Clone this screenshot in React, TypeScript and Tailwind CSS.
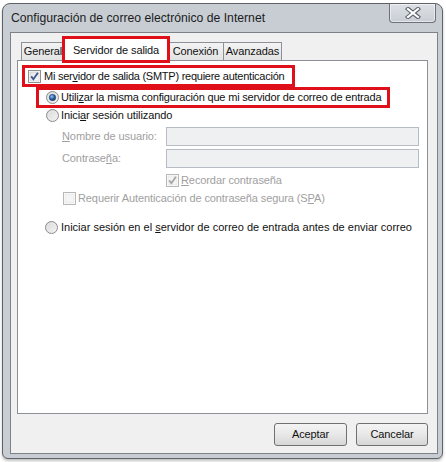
import React from 'react';

const font = { fontFamily: '"Liberation Sans", Arial, sans-serif' };

function CheckBox({ checked, disabled }: { checked?: boolean; disabled?: boolean }) {
  const border = disabled ? '#b8b8b8' : '#8e8f8f';
  const mark = disabled ? '#a6a6a6' : '#3b5590';
  return (
    <svg width="13" height="13" viewBox="0 0 13 13" className="shrink-0">
      <defs>
        <linearGradient id={disabled ? 'cbd' : 'cb'} x1="0" y1="0" x2="1" y2="1">
          <stop offset="0" stopColor={disabled ? '#f4f4f4' : '#e2e2e2'} />
          <stop offset="1" stopColor={disabled ? '#f4f4f4' : '#fbfbfb'} />
        </linearGradient>
      </defs>
      <rect x="0.5" y="0.5" width="12" height="12" fill="#fff" stroke={border} />
      <rect x="2" y="2" width="9" height="9" fill={`url(#${disabled ? 'cbd' : 'cb'})`} stroke={disabled ? '#e2e2e2' : '#c6c6c6'} strokeWidth="0.6" />
      {checked && <path d="M3.2 6.4 L5.4 9.3 L9.9 2.8" fill="none" stroke={mark} strokeWidth="1.8" />}
    </svg>
  );
}

function Radio({ checked }: { checked?: boolean }) {
  return (
    <svg width="13" height="13" viewBox="0 0 13 13" className="shrink-0">
      <defs>
        <linearGradient id="rb" x1="0" y1="0" x2="1" y2="1">
          <stop offset="0" stopColor="#d6d6d6" />
          <stop offset="1" stopColor="#f7f7f7" />
        </linearGradient>
        <radialGradient id="rd" cx="0.4" cy="0.35" r="0.7">
          <stop offset="0" stopColor="#9fc4ea" />
          <stop offset="0.5" stopColor="#2e6cb0" />
          <stop offset="1" stopColor="#0f2c55" />
        </radialGradient>
      </defs>
      <circle cx="6.5" cy="6.5" r="6" fill="url(#rb)" stroke="#8a8a8a" />
      <circle cx="6.5" cy="6.5" r="4.3" fill="none" stroke="#e8e8e8" strokeWidth="0.8" />
      {checked && <circle cx="6.5" cy="6.5" r="3.2" fill="url(#rd)" stroke="#1a3b66" strokeWidth="0.5" />}
    </svg>
  );
}

function RedBox({ className }: { className: string }) {
  return <div className={`absolute border-[3px] border-[#e0101a] pointer-events-none ${className}`} />;
}

export default function App() {
  return (
    <div className="w-[446px] h-[462px] bg-white pt-[3px] pl-[2px]" style={font}>
      {/* Window */}
      <div className="w-[441px] h-[456px] border border-[#5d6368] rounded-t-[8px] rounded-b-[6px] bg-[#c7cdd3] flex flex-col shadow-[0_2px_3px_rgba(0,0,0,0.25)]">
        {/* Title bar */}
        <div className="h-[28px] flex items-start justify-between">
          <div className="pl-[8px] pt-[7px] text-[12.2px] leading-[14px] text-[#1c1c1c]">
            Configuración de correo electrónico de Internet
          </div>
          <div className="mr-[6px] w-[47px] h-[19px] border border-t-0 border-[#6c7278] rounded-b-[4px] bg-gradient-to-b from-[#dde1e5] to-[#c8ced4] flex items-center justify-center shadow-[inset_0_0_0_1px_rgba(255,255,255,0.5)]">
            <svg width="16" height="12" viewBox="0 0 16 12">
              <path d="M3 2 L13 10 M13 2 L3 10" stroke="#5a6066" strokeWidth="4.2" strokeLinecap="square" />
              <path d="M3 2 L13 10 M13 2 L3 10" stroke="#ffffff" strokeWidth="2.2" strokeLinecap="square" />
            </svg>
          </div>
        </div>

        {/* Dialog body */}
        <div className="ml-[7px] mr-[4px] mb-[4px] flex-1 border border-[#7d8288] bg-[#f0f0f0] flex flex-col pl-[6px] pr-[9px] pt-[5px] text-[11px] tracking-[-0.1px] text-[#111]">
          {/* Tabs */}
          <div className="flex items-end pl-[4px] h-[22px]">
            <div className="w-[44px] h-[18px] border border-b-0 border-[#8d9097] bg-gradient-to-b from-[#f3f3f3] to-[#e3e3e3] flex items-center justify-center">
              General
            </div>
            <div className="relative z-10 -ml-px w-[104px] h-[23px] -mb-px border border-b-0 border-[#8d9097] bg-white flex items-start justify-center pt-[3px]">
              Servidor de salida
              <RedBox className="-left-[3px] -top-[3px] w-[108px] h-[27px]" />
            </div>
            <div className="-ml-px w-[57px] h-[18px] border border-b-0 border-[#8d9097] bg-gradient-to-b from-[#f3f3f3] to-[#e3e3e3] flex items-center justify-center">
              Conexión
            </div>
            <div className="-ml-px w-[59px] h-[18px] border border-b-0 border-[#8d9097] bg-gradient-to-b from-[#f3f3f3] to-[#e3e3e3] flex items-center justify-center">
              Avanzadas
            </div>
          </div>

          {/* Panel */}
          <div className="h-[354px] border border-[#8d9097] bg-white flex flex-col">
            <div className="relative mt-[9px] ml-[10px] w-fit flex items-center gap-[3px] h-[13px] tracking-[-0.25px]">
              <CheckBox checked />
              <span>Mi ser<u>v</u>idor de salida (SMTP) requiere autenticación</span>
              <RedBox className="-left-[6px] -top-[5px] w-[273px] h-[22px]" />
            </div>

            <div className="relative mt-[8px] ml-[28px] w-fit flex items-center gap-[2px] h-[13px] tracking-[-0.18px]">
              <Radio checked />
              <span>Utili<u>z</u>ar la misma configuración que mi servidor de correo de entrada</span>
              <RedBox className="-left-[10px] -top-[4px] w-[354px] h-[21px]" />
            </div>

            <div className="mt-[5px] ml-[28px] flex items-center gap-[2px] h-[13px]">
              <Radio />
              <span>Inici<u>a</u>r sesión utilizando</span>
            </div>

            <div className="mt-[5px] ml-[44px] flex items-center h-[19px] text-[#a0a0a0]">
              <span className="w-[104px]"><u>N</u>ombre de usuario:</span>
              <div className="w-[253px] h-[19px] border border-[#b5bcc4] bg-[#eef0f2]" />
            </div>

            <div className="mt-[3px] ml-[44px] flex items-center h-[19px] text-[#a0a0a0]">
              <span className="w-[104px]">Contrase<u>ñ</u>a:</span>
              <div className="w-[253px] h-[19px] border border-[#b5bcc4] bg-[#eef0f2]" />
            </div>

            <div className="mt-[6px] ml-[148px] flex items-center gap-[2px] h-[13px] text-[#a0a0a0]">
              <CheckBox checked disabled />
              <span><u>R</u>ecordar contraseña</span>
            </div>

            <div className="mt-[5px] ml-[45px] flex items-center gap-[2px] h-[13px] text-[#a0a0a0]">
              <CheckBox disabled />
              <span>Requerir Autenticación de contraseña segura (S<u>P</u>A)</span>
            </div>

            <div className="mt-[16px] ml-[27px] flex items-center gap-[3px] h-[13px] tracking-[0px]">
              <Radio />
              <span>Iniciar sesión en el <u>s</u>ervidor de correo de entrada antes de enviar correo</span>
            </div>
          </div>

          {/* Buttons */}
          <div className="mt-[9px] flex justify-end gap-[9px]">
            <button className="w-[73px] h-[23px] border border-[#707070] rounded-[3px] bg-gradient-to-b from-[#f4f4f4] via-[#e8e8e8] to-[#d6d6d6] text-[11px] text-[#111]">
              Aceptar
            </button>
            <button className="w-[72px] h-[23px] border border-[#707070] rounded-[3px] bg-gradient-to-b from-[#f4f4f4] via-[#e8e8e8] to-[#d6d6d6] text-[11px] text-[#111]">
              Cancelar
            </button>
          </div>
        </div>
      </div>
    </div>
  );
}
